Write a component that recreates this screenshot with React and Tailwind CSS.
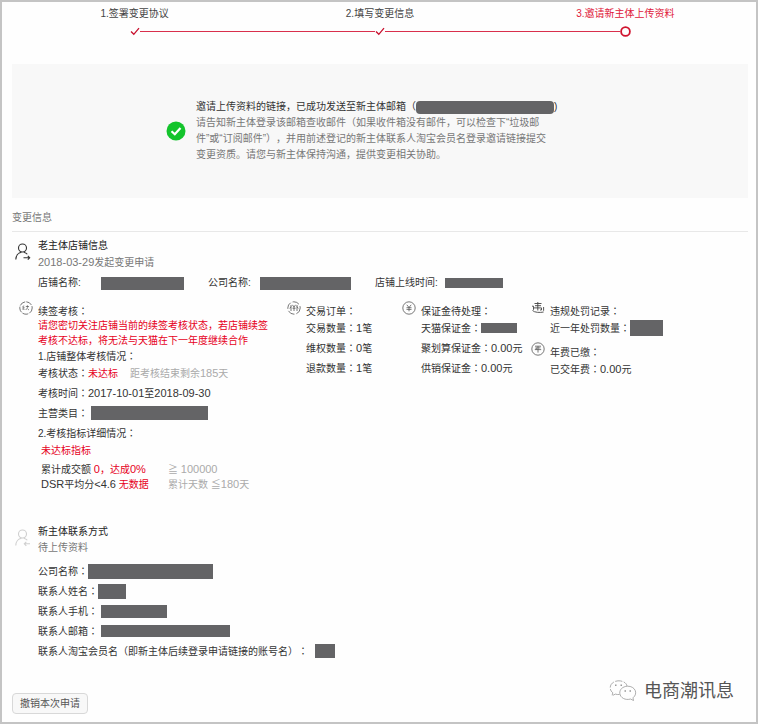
function Colon() {
  return <span className="font-['Noto_Sans_CJK_JP',sans-serif]">{"\uFF1A"}</span>;
}

function Num({ children }) {
  return <span className="text-[11px]">{children}</span>;
}

function Bar({ className }) {
  return <span className={`inline-block shrink-0 bg-[#646466] ${className}`} />;
}

function Row({ label, labelClass = "", children }) {
  return (
    <div className="flex h-5 items-center whitespace-nowrap">
      <dt className={`shrink-0 ${labelClass}`}>
        {label}
        <Colon />
      </dt>
      <dd className="flex items-center">{children}</dd>
    </div>
  );
}

function Check() {
  return (
    <svg width="10" height="9" viewBox="0 0 10 9" className="shrink-0" fill="none" stroke="#c8102e" strokeWidth="1.3">
      <path d="M1 4.5 3.8 7.3 9 1.2" />
    </svg>
  );
}

function Ring() {
  return (
    <svg width="11" height="11" viewBox="0 0 11 11" className="shrink-0" fill="none" stroke="#d0142f" strokeWidth="1.8">
      <circle cx="5.5" cy="5.5" r="4.4" />
    </svg>
  );
}

function Step({ title, first, last }) {
  return (
    <li className="flex flex-col items-center">
      <span className={`leading-4 ${last ? "text-[#e0183a]" : "text-[#444]"}`}>{title}</span>
      <span className="mt-[3px] flex h-3 w-full items-center">
        <span className={`h-px flex-1 ${first ? "" : "bg-[#d92f4c]"}`} />
        {last ? <Ring /> : <Check />}
        <span className={`h-px flex-1 ${last ? "" : "bg-[#d92f4c]"}`} />
      </span>
    </li>
  );
}

function Person({ incoming }) {
  return (
    <svg width="16" height="18" viewBox="0 0 16 18" className="shrink-0" fill="none" stroke={incoming ? "#cfcfcf" : "#333"} strokeWidth="1.1">
      <circle cx="7.5" cy="5" r="4" />
      <path d="M.8 16.5C.9 12.6 3.3 9.6 6.5 9.2M8.8 9.2C10.5 9.6 11.6 10.2 12.3 11.3" />
      {incoming ? <path d="M15 14.8H9.5M11.3 12.8 9.3 14.8 11.3 16.8" /> : <path d="M8.5 14.8H14.5M12.8 12.9 14.7 14.8 12.8 16.7" />}
    </svg>
  );
}

function Round({ children, dashed }) {
  return (
    <svg width="14" height="14" viewBox="0 0 14 14" className="shrink-0" fill="none" stroke="#555" strokeWidth="0.8">
      <circle cx="7" cy="7" r="6.2" strokeDasharray={dashed} />
      {children}
    </svg>
  );
}

function RenewIcon() {
  return (
    <Round dashed="6 1.2">
      <path d="M4.8 4.5 3.6 6.2H5.2L3.6 8.2H5.6M6.8 5.5H10M8.4 4.3V6.8M8.6 6.8 6.7 9M8.7 8 10 9" strokeWidth="0.7" />
    </Round>
  );
}

function OrderIcon() {
  return (
    <Round dashed="7 2">
      <path d="M4 4V10M4 5.5 2.8 7.5M5.4 3.8 7 6 8.6 3.8M7 6V10M5.5 7.2H8.6M10 4V10M10 5.5 11.2 7.5" />
    </Round>
  );
}

function YenIcon() {
  return (
    <Round>
      <path d="M4.8 3.8 7 6.5 9.2 3.8M7 6.5V10.3M4.5 6.7H9.5M4.5 8.4H9.5" />
    </Round>
  );
}

function PenaltyIcon() {
  return (
    <svg width="14" height="14" viewBox="0 0 14 14" className="shrink-0" fill="none" stroke="#444" strokeWidth="0.9">
      <path d="M3.5 2.5H10.5M4 4.7H10M3 6.9H10.5M6.8 1V9.5M10.5 6.9V9H9M1 5.2H2.5V8.8M1.5 9.5C3.5 11.6 9 11.8 12.6 11M12.6 6V9.8" />
    </svg>
  );
}

function FeeIcon() {
  return (
    <Round>
      <path d="M4 4.2H10M4.5 5.9H9.5M3.8 7.6H10.2M7 4.2V10.6M5.2 5.9V7.6" />
    </Round>
  );
}

function Block({ icon, title, children }) {
  return (
    <section className="flex items-start gap-[5px] leading-[15px]">
      {icon}
      <div className="min-w-0 flex-1 pt-[2px] whitespace-nowrap">
        <h3 className="h-[15px]">
          {title}
          <Colon />
        </h3>
        {children}
      </div>
    </section>
  );
}

export default function App() {
  return (
    <main className="border-2 border-[#c4c4c4] bg-[#fefefe] pr-2 pl-[10px] pb-2 pt-1 font-['Liberation_Sans','Noto_Sans_CJK_SC',sans-serif] text-[10px] leading-4 text-[#333] [text-spacing-trim:space-all]">
      <ol className="grid grid-cols-3">
        <Step title="1.签署变更协议" first />
        <Step title="2.填写变更信息" />
        <Step title="3.邀请新主体上传资料" last />
      </ol>

      <section className="mt-[27px] flex items-center gap-[10px] bg-[#f8f8f8] py-[35px] pl-[154px] whitespace-nowrap">
        <svg width="20" height="20" viewBox="0 0 20 20" className="shrink-0">
          <circle cx="10" cy="10" r="9.5" fill="#14c42c" />
          <path d="M5.5 10.3 8.8 13.3 14.5 7" fill="none" stroke="#fff" strokeWidth="2.2" />
        </svg>
        <div className="text-[#777]">
          <p className="flex items-center text-[#333]">
            {"邀请上传资料的链接\uFF0C已成功发送至新主体邮箱\uFF08"}
            <Bar className="h-[13px] w-[138px] rounded-sm" />
            )
          </p>
          <p>{"请告知新主体登录该邮箱查收邮件\uFF08如果收件箱没有邮件\uFF0C可以检查下“垃圾邮"}</p>
          <p>{"件”或“订阅邮件”\uFF09\uFF0C并用前述登记的新主体联系人淘宝会员名登录邀请链接提交"}</p>
          <p>{"变更资质。请您与新主体保持沟通\uFF0C提供变更相关协助。"}</p>
        </div>
      </section>

      <h1 className="mt-3 border-b border-[#e8e8e8] pb-[5px] text-[#777]">变更信息</h1>

      <section className="mt-[6px] flex items-start gap-[7px] pl-[3px]">
        <span className="mt-[5px]"><Person /></span>
        <div>
          <h2 className="text-[#222]">老主体店铺信息</h2>
          <p className="h-4 text-[#777]"><Num>2018-03-29</Num>发起变更申请</p>
        </div>
      </section>

      <dl className="mt-[5px] flex h-4 items-center gap-6 pl-[26px]">
        <div className="flex items-center">
          <dt className="w-[63px]">店铺名称:</dt>
          <dd className="flex"><Bar className="h-[13px] w-[83px]" /></dd>
        </div>
        <div className="flex items-center">
          <dt className="w-[52px]">公司名称:</dt>
          <dd className="flex"><Bar className="h-[13px] w-[91px]" /></dd>
        </div>
        <div className="flex items-center">
          <dt className="w-[70px]">店铺上线时间:</dt>
          <dd className="flex"><Bar className="h-[10px] w-[58px]" /></dd>
        </div>
      </dl>

      <div className="mt-[10px] grid grid-cols-[268fr_115fr_129fr_217fr] pl-[7px]">
        <Block icon={<RenewIcon />} title="续签考核">
          <p className="text-[#e60022]">{"请您密切关注店铺当前的续签考核状态\uFF0C若店铺续签"}</p>
          <p className="text-[#e60022]">{"考核不达标\uFF0C将无法与天猫在下一年度继续合作"}</p>
          <h4 className="h-[15px]">1.店铺整体考核情况<Colon /></h4>
          <dl>
            <Row label="考核状态">
              <span className="text-[#e60022]">未达标</span>
              <span className="ml-3 text-[#aaa]">距考核结束剩余<Num>185</Num>天</span>
            </Row>
            <Row label="考核时间"><span><Num>2017-10-01</Num>至<Num>2018-09-30</Num></span></Row>
            <Row label="主营类目"><Bar className="ml-[3px] h-[14px] w-[117px]" /></Row>
          </dl>
          <h4 className="h-5 leading-5">2.考核指标详细情况<Colon /></h4>
          <p className="pl-[3px] text-[#e60022]">未达标指标</p>
          <table className="mt-1 ml-[3px]">
            <tbody>
              <tr>
                <td className="w-[127px] p-0">累计成交额 <span className="text-[#e60022]"><Num>0</Num>{"\uFF0C达成"}<Num>0%</Num></span></td>
                <td className="p-0 text-[#aaa]">≧ <Num>100000</Num></td>
              </tr>
              <tr>
                <td className="p-0"><Num>DSR</Num>平均分<Num>&lt;4.6</Num> <span className="text-[#e60022]">无数据</span></td>
                <td className="p-0 text-[#aaa]">累计天数 ≦<Num>180</Num>天</td>
              </tr>
            </tbody>
          </table>
        </Block>

        <Block icon={<OrderIcon />} title="交易订单">
          <dl>
            <Row label="交易数量"><span><Num>1</Num>笔</span></Row>
            <Row label="维权数量"><span><Num>0</Num>笔</span></Row>
            <Row label="退款数量"><span><Num>1</Num>笔</span></Row>
          </dl>
        </Block>

        <Block icon={<YenIcon />} title="保证金待处理">
          <dl>
            <Row label="天猫保证金"><Bar className="h-[10px] w-[36px]" /></Row>
            <Row label="聚划算保证金"><span><Num>0.00</Num>元</span></Row>
            <Row label="供销保证金"><span><Num>0.00</Num>元</span></Row>
          </dl>
        </Block>

        <div>
          <Block icon={<PenaltyIcon />} title="违规处罚记录">
            <dl>
              <Row label="近一年处罚数量"><Bar className="h-4 w-[33px]" /></Row>
            </dl>
          </Block>
          <div className="mt-1">
            <Block icon={<FeeIcon />} title="年费已缴">
              <dl>
                <Row label="已交年费"><span><Num>0.00</Num>元</span></Row>
              </dl>
            </Block>
          </div>
        </div>
      </div>

      <section className="mt-8 flex items-start gap-[7px] pl-[3px]">
        <span className="mt-[5px]"><Person incoming /></span>
        <div>
          <h2 className="text-[#222]">新主体联系方式</h2>
          <p className="text-[#777]">待上传资料</p>
          <dl className="mt-[5px]">
            <Row label="公司名称"><Bar className="h-[15px] w-[125px]" /></Row>
            <Row label="联系人姓名"><Bar className="h-[15px] w-[28px]" /></Row>
            <Row label="联系人手机" labelClass="w-[63px]"><Bar className="h-[13px] w-[66px]" /></Row>
            <Row label="联系人邮箱" labelClass="w-[63px]"><Bar className="h-[12px] w-[129px]" /></Row>
            <Row label={"联系人淘宝会员名\uFF08即新主体后续登录申请链接的账号名\uFF09"} labelClass="w-[277px]"><Bar className="h-[14px] w-[20px]" /></Row>
          </dl>
        </div>
      </section>

      <footer className="mt-[18px] flex items-end justify-between pr-[14px]">
        <button type="button" className="h-[21px] rounded-sm border border-[#d8d8d8] bg-[#f8f8f8] px-[7px] leading-4 text-[#555]">撤销本次申请</button>
        <div className="mb-[11px] flex items-center gap-[7px]">
          <svg width="28" height="24" viewBox="0 0 28 24" fill="none" stroke="#999" strokeWidth="0.8">
            <path d="M10.5 15.5C9 15.6 7.5 15.5 6.3 15.1L3 16.8 3.8 13.8C-1 10 1 2.5 9 1.8 14 1.6 17.5 4 18 7" strokeDasharray="7 1.5" />
            <path d="M18.5 7.2C13.5 7.5 10.5 10.5 10.8 14.3 11.3 19 16.5 21.5 21.5 20L24.5 21.5 24 18.8C29.5 14.5 26 7 18.5 7.2Z" />
            <path d="M6 6.3H7.5M11.5 6.3H13M15.5 12H17M20.5 12H22" strokeWidth="1.4" />
          </svg>
          <span className="text-[18px] leading-6 text-[#555]">电商潮讯息</span>
        </div>
      </footer>
    </main>
  );
}
